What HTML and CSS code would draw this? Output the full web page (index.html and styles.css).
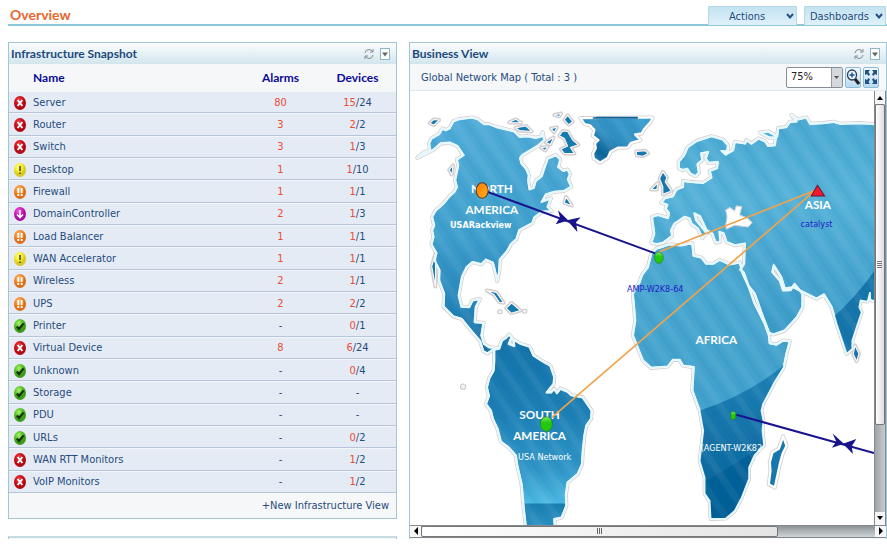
FILE: index.html
```html
<!DOCTYPE html>
<html lang="en">
<head>
<meta charset="utf-8">
<title>Overview</title>
<link rel="stylesheet" href="styles.css">
</head>
<body>
<svg class="defs" aria-hidden="true">
  <defs>
    <radialGradient id="red" cx=".4" cy=".3"><stop offset="0" stop-color="#f0555a"/><stop offset=".5" stop-color="#d9141c"/><stop offset="1" stop-color="#b30a12"/></radialGradient>
    <radialGradient id="yellow" cx=".4" cy=".3"><stop offset="0" stop-color="#ffff9a"/><stop offset=".6" stop-color="#f8ee20"/><stop offset="1" stop-color="#d8c820"/></radialGradient>
    <radialGradient id="orange" cx=".4" cy=".3"><stop offset="0" stop-color="#ffc080"/><stop offset=".6" stop-color="#f88a28"/><stop offset="1" stop-color="#dc6e18"/></radialGradient>
    <radialGradient id="pink" cx=".4" cy=".3"><stop offset="0" stop-color="#f070e0"/><stop offset=".6" stop-color="#d41cc0"/><stop offset="1" stop-color="#a8109c"/></radialGradient>
    <radialGradient id="green" cx=".4" cy=".3"><stop offset="0" stop-color="#b0f070"/><stop offset=".6" stop-color="#5cc828"/><stop offset="1" stop-color="#3c9c18"/></radialGradient>
    <symbol id="critical" viewBox="0 0 12 14"><ellipse cx="6" cy="7" rx="6" ry="7" fill="url(#red)"/><path d="M3.6 4L8.4 10M8.4 4L3.6 10" stroke="#fff" stroke-width="2"/></symbol>
    <symbol id="attention" viewBox="0 0 12 14"><ellipse cx="6" cy="7" rx="6" ry="7" fill="url(#yellow)"/><path d="M6 3v5M6 9.500v1.500" stroke="#333" stroke-width="1.400"/></symbol>
    <symbol id="trouble" viewBox="0 0 12 14"><ellipse cx="6" cy="7" rx="6" ry="7" fill="url(#orange)"/><path d="M4.300 3v5M7.700 3v5M4.300 9v2M7.700 9v2" stroke="#fff" stroke-width="1.800"/></symbol>
    <symbol id="down" viewBox="0 0 12 14"><ellipse cx="6" cy="7" rx="6" ry="7" fill="url(#pink)"/><path d="M6 3v7M3 7.500L6 10.500L9 7.500" fill="none" stroke="#fff" stroke-width="1.600"/></symbol>
    <symbol id="clear" viewBox="0 0 12 14"><ellipse cx="6" cy="7" rx="6" ry="7" fill="url(#green)"/><path d="M2.800 7.500L5 10L9.600 4.500" fill="none" stroke="#123008" stroke-width="2.200"/></symbol>
    <symbol id="refresh" viewBox="0 0 10 12"><path d="M1 5Q1.500 1.500 5 1.500Q7 1.500 8.500 3.500M9 7Q8.500 10.500 5 10.500Q3 10.500 1.500 8.500M9 1v3H6M1 11V8h3" fill="none" stroke="#858b91"/></symbol>
    <symbol id="menu" viewBox="0 0 10 12"><rect x=".5" y=".5" width="9" height="11" fill="#fff" stroke="#8db6c6"/><path d="M2 4.500h6L5 8.500z" fill="#666"/></symbol>
    <symbol id="chevron" viewBox="0 0 8 7"><path d="M1 1L4 4.500L7 1" fill="none" stroke="#245089" stroke-width="2"/></symbol>
  </defs>
</svg>

<header class="top">
  <h1>Overview</h1>
  <div class="tabs">
    <label class="pick actions"><select aria-label="Actions"><option>Actions</option></select><svg><use href="#chevron"/></svg></label>
    <label class="pick dashboards"><select aria-label="Dashboards"><option>Dashboards</option></select><svg><use href="#chevron"/></svg></label>
  </div>
</header>

<main class="columns">
  <div class="column">
    <section class="panel">
      <div class="bar"><h2>Infrastructure Snapshot</h2><button class="tool" aria-label="Refresh"><svg><use href="#refresh"/></svg></button><button class="tool" aria-label="Menu"><svg><use href="#menu"/></svg></button></div>
      <table class="snapshot">
        <thead><tr><th></th><th class="name">Name</th><th>Alarms</th><th>Devices</th></tr></thead>
        <tbody>
          <tr><td><svg><use href="#critical"/></svg></td><td class="name"><a href="#">Server</a></td><td><b>80</b></td><td><b>15</b>/24</td></tr>
          <tr><td><svg><use href="#critical"/></svg></td><td class="name"><a href="#">Router</a></td><td><b>3</b></td><td><b>2</b>/2</td></tr>
          <tr><td><svg><use href="#critical"/></svg></td><td class="name"><a href="#">Switch</a></td><td><b>3</b></td><td><b>1</b>/3</td></tr>
          <tr><td><svg><use href="#attention"/></svg></td><td class="name"><a href="#">Desktop</a></td><td><b>1</b></td><td><b>1</b>/10</td></tr>
          <tr><td><svg><use href="#trouble"/></svg></td><td class="name"><a href="#">Firewall</a></td><td><b>1</b></td><td><b>1</b>/1</td></tr>
          <tr><td><svg><use href="#down"/></svg></td><td class="name"><a href="#">DomainController</a></td><td><b>2</b></td><td><b>1</b>/3</td></tr>
          <tr><td><svg><use href="#trouble"/></svg></td><td class="name"><a href="#">Load Balancer</a></td><td><b>1</b></td><td><b>1</b>/1</td></tr>
          <tr><td><svg><use href="#attention"/></svg></td><td class="name"><a href="#">WAN Accelerator</a></td><td><b>1</b></td><td><b>1</b>/1</td></tr>
          <tr><td><svg><use href="#trouble"/></svg></td><td class="name"><a href="#">Wireless</a></td><td><b>2</b></td><td><b>1</b>/1</td></tr>
          <tr><td><svg><use href="#trouble"/></svg></td><td class="name"><a href="#">UPS</a></td><td><b>2</b></td><td><b>2</b>/2</td></tr>
          <tr><td><svg><use href="#clear"/></svg></td><td class="name"><a href="#">Printer</a></td><td>-</td><td><b>0</b>/1</td></tr>
          <tr><td><svg><use href="#critical"/></svg></td><td class="name"><a href="#">Virtual Device</a></td><td><b>8</b></td><td><b>6</b>/24</td></tr>
          <tr><td><svg><use href="#clear"/></svg></td><td class="name"><a href="#">Unknown</a></td><td>-</td><td><b>0</b>/4</td></tr>
          <tr><td><svg><use href="#clear"/></svg></td><td class="name"><a href="#">Storage</a></td><td>-</td><td>-</td></tr>
          <tr><td><svg><use href="#clear"/></svg></td><td class="name"><a href="#">PDU</a></td><td>-</td><td>-</td></tr>
          <tr><td><svg><use href="#clear"/></svg></td><td class="name"><a href="#">URLs</a></td><td>-</td><td><b>0</b>/2</td></tr>
          <tr><td><svg><use href="#critical"/></svg></td><td class="name"><a href="#">WAN RTT Monitors</a></td><td>-</td><td><b>1</b>/2</td></tr>
          <tr><td><svg><use href="#critical"/></svg></td><td class="name"><a href="#">VoIP Monitors</a></td><td>-</td><td><b>1</b>/2</td></tr>
        </tbody>
      </table>
      <div class="more"><a href="#">+New Infrastructure View</a></div>
    </section>
    <section class="panel next"></section>
  </div>

  <section class="panel business">
    <div class="bar"><h2>Business View</h2><button class="tool" aria-label="Refresh"><svg><use href="#refresh"/></svg></button><button class="tool" aria-label="Menu"><svg><use href="#menu"/></svg></button></div>
    <div class="controls">
      <span class="caption">Global Network Map ( Total : 3 )</span>
      <label class="pick zoom"><select aria-label="Zoom"><option>75%</option></select><svg viewBox="0 0 11 19"><path d="M0 0H11V19H0z" fill="#d4d8dd"/><path d="M.5 0V19" stroke="#999"/><path d="M3 8h5L5.500 11z" fill="#555"/></svg></label>
      <button class="square" aria-label="Zoom in"><svg viewBox="0 0 14 18"><path d="M9 11L13 16" stroke="#222" stroke-width="3"/><ellipse cx="6" cy="7" rx="4.500" ry="5" fill="#e8f4ff" stroke="#293b4d" stroke-width="1.300"/><path d="M6 4.500v5M3.500 7h5" stroke="#17579c" stroke-width="1.500"/></svg></button>
      <button class="square" aria-label="Fit map"><svg viewBox="0 0 14 18"><path d="M1 2h5L4.500 4L6 6.500L4.500 8L3 6L1 7zM13 2H8L9.500 4L8 6.500L9.500 8L11 6L13 7zM1 16h5L4.500 14L6 11.500L4.500 10L3 12L1 11zM13 16H8L9.500 14L8 11.500L9.500 10L11 12L13 11z" fill="#205489"/></svg></button>
    </div>
    <div class="viewport">
      <svg class="map" viewBox="18 3 1389 1299" preserveAspectRatio="xMinYMin slice" role="img" aria-label="Global network map">
        <defs>
          <linearGradient id="north" x1="0" y1="0" x2="0" y2="1"><stop offset="0" stop-color="#50acd8"/><stop offset=".5" stop-color="#3f9fcd"/><stop offset=".8" stop-color="#2685b9"/><stop offset="1" stop-color="#156ba1"/></linearGradient>
          <linearGradient id="south" x1="0" y1="0" x2="0" y2="1"><stop offset="0" stop-color="#1472a8"/><stop offset=".4" stop-color="#1d7fb5"/><stop offset=".7" stop-color="#3197c8"/><stop offset=".87" stop-color="#4db8e3"/><stop offset=".88" stop-color="#1d7fb2"/><stop offset="1" stop-color="#2b94c4"/></linearGradient>
          <linearGradient id="ice" x1="1" y1="0" x2="0" y2="1"><stop offset="0" stop-color="#3b9fce"/><stop offset=".5" stop-color="#318fc2"/><stop offset=".75" stop-color="#0f649a"/><stop offset="1" stop-color="#2a89ba"/></linearGradient>
          <linearGradient id="east" x1="0" y1="0" x2="0" y2="1"><stop offset="0" stop-color="#4ba9d2"/><stop offset=".35" stop-color="#54b1d8"/><stop offset="1" stop-color="#3998c7"/></linearGradient>
          <linearGradient id="sahara" x1="0" y1="0" x2="0" y2="1"><stop offset="0" stop-color="#4aa8d1"/><stop offset="1" stop-color="#3d9cca"/></linearGradient>
          <linearGradient id="deep" x1="0" y1="0" x2="0" y2="1"><stop offset="0" stop-color="#2183b8"/><stop offset="1" stop-color="#056097"/></linearGradient>
          <pattern id="stripes" width="58" height="58" patternUnits="userSpaceOnUse" patternTransform="rotate(-34)"><path d="M12 0V58" stroke="#fff" stroke-opacity=".05" stroke-width="20"/><path d="M42 0V58" stroke="#004c80" stroke-opacity=".05" stroke-width="12"/></pattern>
          <filter id="coast" x="-5%" y="-5%" width="110%" height="110%"><feTurbulence type="fractalNoise" baseFrequency=".09" numOctaves="2" seed="4"/><feDisplacementMap in="SourceGraphic" scale="4" xChannelSelector="R" yChannelSelector="G"/></filter>
          <path id="l-north" d="M40 203L58 187L78 180L75 160L82 145L105 132L115 115L125 120L136 115L148 93L165 87L205 82L222 88L240 102L255 102L275 110L300 116L330 124L346 140L370 138L395 143L413 138L415 126L420 150L400 168L372 184L354 195L348 204L352 220L366 236L374 255L372 270L376 297L388 293L394 272L412 258L418 240L430 205L455 195L468 208L462 230L477 242L490 238L497 252L491 267L501 290L480 302L450 305L425 313L413 334L440 324L430 350L442 362L413 365L390 382L385 398L345 420L337 446L320 462L309 482L287 508L285 545L279 572L272 540L266 517L245 508L232 522L205 515L188 530L174 559L170 580L164 615L172 648L195 650L205 630L228 625L215 650L212 695L238 697L232 735L240 760L255 770L280 772L265 778L250 789L237 782L228 752L205 725L172 685L148 678L118 648L120 610L105 570L106 540L91 510L97 488L82 462L88 440L84 420L90 405L84 380L95 360L117 341L138 316L150 306L158 291L153 270L162 225L158 208L178 195L160 168L138 158L110 160L90 178L66 190Z"/>
          <path id="l-south" d="M270 777L285 774L293 750L307 740L315 732L322 740L314 760L330 766L328 747L350 760L376 768L388 795L415 812L438 825L450 858L448 880L428 905L440 905L450 895L458 907L468 894L490 903L500 913L535 920L562 960L560 985L546 1005L540 1035L535 1085L533 1120L520 1150L490 1175L485 1210L486 1245L472 1280L450 1285L452 1310L365 1310L358 1250L352 1180L338 1120L335 1095L313 1070L290 1053L280 1015L266 985L260 960L245 940L254 916L248 890L255 863L268 840L270 810Z"/>
          <path id="l-ice" d="M528 84L745 82L738 96L718 118L712 130L692 133L708 150L680 158L670 172L640 173L618 185L610 203L587 218L568 205L566 190L574 175L572 160L582 150L565 137L570 120L557 106L541 102Z"/>
          <path id="l-asia" d="M95 457L104 430L97 380L115 374L145 383L148 368L138 355L143 344L125 337L136 324L160 318L170 298L190 290L190 272L212 275L250 278L275 262L270 242L292 234L294 216L267 218L258 205L265 186L245 190L248 210L234 222L238 248L228 258L212 250L203 236L190 240L178 235L177 215L193 196L204 171L232 152L275 138L310 148L325 165L323 184L307 183L318 193L340 180L345 155L376 160L380 150L395 160L416 145L435 153L445 167L465 165L468 143L447 142L420 127L446 124L472 139L475 114L499 111L510 95L530 94L515 75L535 88L560 82L571 101L610 99L640 95L660 101L720 99L790 104L790 640L751 628L750 605L743 633L722 630L718 650L725 665L710 710L697 750L697 775L680 790L665 745L650 700L635 650L612 612L590 625L560 610L520 590L495 595L484 560L462 525L458 545L480 570L490 600L512 599L524 581L548 610L548 650L532 680L495 720L460 732L448 727L430 680L405 610L386 586L372 547L362 538L373 520L375 460L345 465L320 455L312 430L300 425L302 455L288 457L278 430L260 418L241 378L225 370L230 390L245 408L262 430L248 443L235 415L215 400L210 385L195 380L165 400L155 420L158 437L130 458L110 462Z"/>
          <path id="l-africa" d="M110 475L150 462L185 465L218 458L222 496L246 502L260 520L280 520L300 508L330 522L360 516L370 552L386 586L405 640L435 700L448 735L450 758L470 762L490 750L510 752L500 790L492 830L464 875L430 940L425 960L431 990L428 1020L433 1063L404 1094L388 1130L388 1164L366 1220L345 1260L318 1283L273 1284L270 1230L255 1208L255 1160L240 1110L251 1020L240 960L218 900L222 830L190 825L180 808L160 808L145 828L95 832L70 810L40 735L47 690L40 610L60 575L67 555L85 530L95 490Z"/>
          <path id="l-madagascar" d="M490 1037L500 1065L488 1090L480 1120L465 1190L447 1180L452 1140L450 1115L458 1085L477 1074Z"/>
          <g id="isles"><path d="M130 245L142 262L137 275L155 302L130 312L130 290L120 265ZM95 298L115 278L112 298Z"/><path d="M50 184L77 182L86 190L70 198L52 196ZM705 765L717 790L710 812L700 790Z"/></g>
          <g id="arctic"><path d="M77 99L90 88L105 90L89 105ZM315 97L335 88L350 98ZM335 113L365 108L382 124L345 121ZM450 75L470 70L465 79ZM480 89L490 76L505 95L493 104ZM475 123L490 124L505 150L522 164L498 172L510 190L480 190L470 177L490 168L480 145L465 137ZM440 115L458 112L450 127ZM425 157L448 142L438 163ZM411 173L430 170L422 181ZM135 239L147 226L143 253ZM485 320L502 346L480 338ZM83 528L95 488L94 588ZM248 600L277 606L298 637L285 635L270 613ZM306 653L322 638L348 660L321 668Z"/></g>
          <g id="atolls"><ellipse cx="361" cy="662" rx="7" ry="6"/><ellipse cx="287" cy="664" rx="7" ry="6"/><ellipse cx="177" cy="888" rx="8" ry="8"/></g>
          <clipPath id="c-africa"><use href="#l-africa"/></clipPath>
          <clipPath id="c-asia"><use href="#l-asia"/></clipPath>
          <linearGradient id="ball" x1="0" y1="0" x2="0" y2="1"><stop offset="0" stop-color="#82ec5a"/><stop offset=".4" stop-color="#25c910"/><stop offset="1" stop-color="#20c908"/></linearGradient>
          <linearGradient id="sun" x1="0" y1="0" x2="1" y2="1"><stop offset="0" stop-color="#ff7900"/><stop offset="1" stop-color="#ffb020"/></linearGradient>
        </defs>
        <g filter="url(#coast)">
          <g class="shore"><use href="#l-north"/><use href="#l-south"/><use href="#l-ice"/><use href="#arctic"/><g transform="translate(645 0)"><use href="#l-asia"/><use href="#l-africa"/><use href="#l-madagascar"/><use href="#isles"/></g></g>
          <g class="land">
            <use href="#l-north" fill="url(#north)"/><use href="#l-south" fill="url(#south)"/><use href="#l-ice" fill="url(#ice)"/>
            <use class="thin" href="#arctic" fill="#197aae"/>
            <g transform="translate(645 0)"><use href="#l-africa" fill="url(#sahara)"/><use href="#l-asia" fill="url(#east)"/><use href="#l-madagascar" fill="#1877ad"/><use class="thin" href="#isles" fill="#1877ad"/></g>
          </g>
          <use class="atolls" href="#atolls"/>
          <g transform="translate(645 0)">
            <g clip-path="url(#c-africa)"><path d="M230 963Q400 910 520 800V1300H230Z" fill="url(#deep)"/><path d="M240 1180Q350 1120 450 1050V1300H240Z" fill="#005b93" fill-opacity=".6"/></g>
            <path clip-path="url(#c-asia)" d="M790 500Q730 600 630 690V800H790Z" fill="#1575aa"/>
          </g>
          <g fill="url(#stripes)"><use href="#l-north"/><use href="#l-south"/><use href="#l-ice"/><g transform="translate(645 0)"><use href="#l-asia"/><use href="#l-africa"/></g></g>
          <path d="M565 82L580 80H700V86H565Z" fill="#0e6498"/>
          <g class="coastline"><use href="#l-north"/><use href="#l-south"/><g transform="translate(645 0)"><use href="#l-africa"/><use href="#l-asia"/></g></g>
          <path class="sea" transform="translate(645 0)" d="M318 402Q326 380 318 360L330 352L345 362L350 347L366 349L360 374L382 383L397 397L385 410L345 405L320 416Z"/>
        </g>
        <g class="continent">
          <text x="263" y="308">NORTH</text><text x="263" y="371">AMERICA</text>
          <text x="406" y="984">SOUTH</text><text x="406" y="1047">AMERICA</text>
          <text x="1239" y="355">ASIA</text><text x="935" y="761">AFRICA</text>
        </g>
        <g class="routes orange"><path d="M1232 300L763 485M1232 300L443 980"/></g>
        <g class="routes navy"><path d="M250 305L752 489M995 972L1407 1087"/></g>
        <path class="heads" d="M461 360L492 391L454 402L467 382ZM488 390L529 381L515 396L519 425ZM1283 1028L1317 1059L1281 1071L1294 1052ZM1314 1059L1354 1045L1340 1067L1344 1090Z"/>
        <ellipse cx="234" cy="301" rx="18" ry="23" fill="url(#sun)" stroke="#553c28" stroke-width="3"/>
        <g fill="url(#ball)" stroke="#257b29" stroke-width="2"><ellipse cx="763" cy="502" rx="13" ry="17"/><ellipse cx="426" cy="1000" rx="18" ry="22"/><rect x="978" y="963" width="15" height="23" rx="5"/></g>
        <path d="M1238 285L1259 317H1219Z" fill="#f5192b" stroke="#6b1538" stroke-width="3"/>
        <g class="node">
          <text x="230" y="413" class="light bold">USARackview</text>
          <text x="421" y="1108" class="light">USA Network</text>
          <text x="752" y="606">AMP-W2K8-64</text>
          <text x="1235" y="410">catalyst</text>
          <text x="980" y="1080" class="light">(AGENT-W2K82</text>
        </g>
      </svg>
      <div class="track vertical"><button aria-label="Scroll up"><svg viewBox="0 0 8 8"><path d="M1 6L4 2L7 6z"/></svg></button><div class="thumb"><svg viewBox="0 0 8 8"><path d="M1 .5H6M1 2.500H6M1 4.500H6M1 6.500H6" stroke="#777"/></svg></div><button aria-label="Scroll down"><svg viewBox="0 0 8 8"><path d="M1 2L4 6L7 2z"/></svg></button></div>
      <div class="track horizontal"><button aria-label="Scroll left"><svg viewBox="0 0 8 8"><path d="M6 0L2 4L6 8z"/></svg></button><div class="thumb"><svg viewBox="0 0 8 8"><path d="M1.500 1V7M3.500 1V7M5.500 1V7" stroke="#666"/></svg></div><button aria-label="Scroll right"><svg viewBox="0 0 8 8"><path d="M2 0L6 4L2 8z"/></svg></button></div>
    </div>
  </section>
</main>
</body>
</html>
```
FILE: styles.css
```css
* { box-sizing: border-box; }
body {
  margin: 0;
  padding: 6px 0 6px 8px;
  background: #fff;
  color: #254b80;
  font: 11px/16px "DejaVu Sans Condensed", "DejaVu Sans", sans-serif;
}
.defs { position: absolute; width: 0; height: 0; }
a { color: inherit; text-decoration: none; }
button { padding: 0; border: 0; background: none; }
h1, h2 { margin: 0; font-family: Lato, sans-serif; font-weight: 700; }
.top { display: flex; justify-content: space-between; height: 20px; border-bottom: 2px solid #8cc8dc; }
h1 { padding-left: 2px; color: #e8662c; font-size: 14px; line-height: 18px; }
.tabs { display: flex; gap: 7px; padding-right: 1px; }
.pick { display: grid; align-items: center; }
.pick select, .pick svg { grid-area: 1 / 1; }
.pick svg { justify-self: end; pointer-events: none; }
.pick select { width: 100%; height: 100%; margin: 0; border: 0; background: none; color: inherit; font: inherit; appearance: none; }
.tabs .pick { height: 19px; border: 1px solid #b5dae7; border-bottom: 0; background: linear-gradient(#c3e2f1, #dff1fa); }
.tabs svg { width: 8px; height: 7px; margin-right: 2px; }
.tabs select { padding: 2px 5px 0; }
.actions { width: 89px; }
.actions select { padding-left: 20px; }
.dashboards { width: 82px; }
.columns { display: grid; grid-template-columns: 389fr 478fr; gap: 12px; margin-top: 16px; }
.panel { border: 1px solid #a4c5d2; background: #f6f7f9; }
.bar { display: flex; align-items: center; gap: 6px; height: 21px; padding: 0 6px 0 2px; background: linear-gradient(#fbfdfe, #e2eff4 60%, #d3e5ec); }
h2 { flex: 1; color: #1d4a7d; font-size: 12px; line-height: 20px; }
.tool { display: flex; }
.tool svg { width: 10px; height: 12px; }
.snapshot { width: 100%; height: 429px; border-collapse: collapse; table-layout: fixed; text-align: center; }
.snapshot th, .snapshot td { padding: 0; }
.snapshot th { height: 27px; color: #0b0b95; font: bold 12px/16px Lato, sans-serif; }
.snapshot th:first-child { width: 24px; }
.snapshot th:nth-child(3) { width: 77px; }
.snapshot th:nth-child(4) { width: 77px; }
.snapshot .name { text-align: left; }
.snapshot td { padding-top: 2px; border-bottom: 1px solid #b7c5da; background: #e5ebf4; box-shadow: inset 0 1px #f3f6fa; }
.snapshot td svg { display: block; width: 12px; height: 14px; margin-left: 5px; }
.snapshot b { color: #ea4d34; font-weight: normal; }
.more { padding: 5px 7px 4px; text-align: right; }
.next { height: 3px; margin-top: 17px; border-top: 2px solid #c5dbe3; border-bottom: 0; }
.business { border-bottom: 0; }
.controls { display: flex; align-items: center; gap: 2px; height: 27px; padding: 0 7px 0 11px; border-bottom: 1px solid #e0e9ef; }
.caption { flex: 1; padding-top: 2px; }
.zoom { width: 57px; height: 21px; border: 1px solid #858c94; border-radius: 2px; background: #fff; color: #222; }
.zoom select { padding: 0 4px; }
.zoom svg { width: 11px; height: 19px; }
.square { display: flex; align-items: center; justify-content: center; width: 16px; height: 21px; border: 1px solid #8bbbd8; border-radius: 2px; background: linear-gradient(#f1f9fd, #b9daf0); }
.square svg { flex: none; width: 14px; height: 18px; }
.viewport { display: grid; grid-template-columns: 1fr 12px; background: #fff; }
.map { display: block; width: 100%; aspect-ratio: 463 / 433; }
.shore { fill: none; stroke: #b8aeb0; stroke-opacity: .6; stroke-width: 12; stroke-linejoin: round; }
.land { stroke: #fff; stroke-width: 7; stroke-linejoin: round; }
.thin { stroke-width: 3; }
.atolls { fill: #f4f4f4; stroke: #c9c9c9; stroke-width: 3; }
.coastline { fill: none; stroke: #e2f8ff; stroke-width: 5; }
.sea { fill: #fff; stroke: #d2d5d9; stroke-width: 3; }
.continent { fill: #fff; font: bold 35px "Liberation Sans Narrow", Lato, sans-serif; text-anchor: middle; }
.routes { fill: none; }
.orange { stroke: #f0a34c; stroke-width: 5; }
.navy { stroke: #19148e; stroke-width: 6; }
.heads { fill: #19148e; }
.node { fill: #2020c8; font: 27px "DejaVu Sans Condensed", "DejaVu Sans", sans-serif; text-anchor: middle; }
.node .light { fill: #fff; }
.node .bold { font-weight: bold; }
.track { display: flex; justify-content: space-between; border: 1px solid #85898d; background: linear-gradient(90deg, #9da5a9, #c6cbce); }
.track button { display: grid; place-items: center; flex: none; background: #f7f7f7; }
.track svg { width: 8px; height: 8px; }
.thumb { display: grid; place-items: center; border: 1px solid #777; border-radius: 2px; }
.vertical { flex-direction: column; border-width: 0 1px; }
.vertical button { height: 13px; }
.vertical .thumb { flex: 0 0 74%; margin-bottom: auto; background: linear-gradient(90deg, #fff, #ddd); }
.horizontal { grid-column: 1 / -1; height: 13px; border-width: 1px 0; background: linear-gradient(#8d9498, #d0d4d6); }
.horizontal button { width: 11px; }
.horizontal .thumb { flex: 0 0 75%; margin-right: auto; background: linear-gradient(90deg, #fff, #e4e4e4); }
```
